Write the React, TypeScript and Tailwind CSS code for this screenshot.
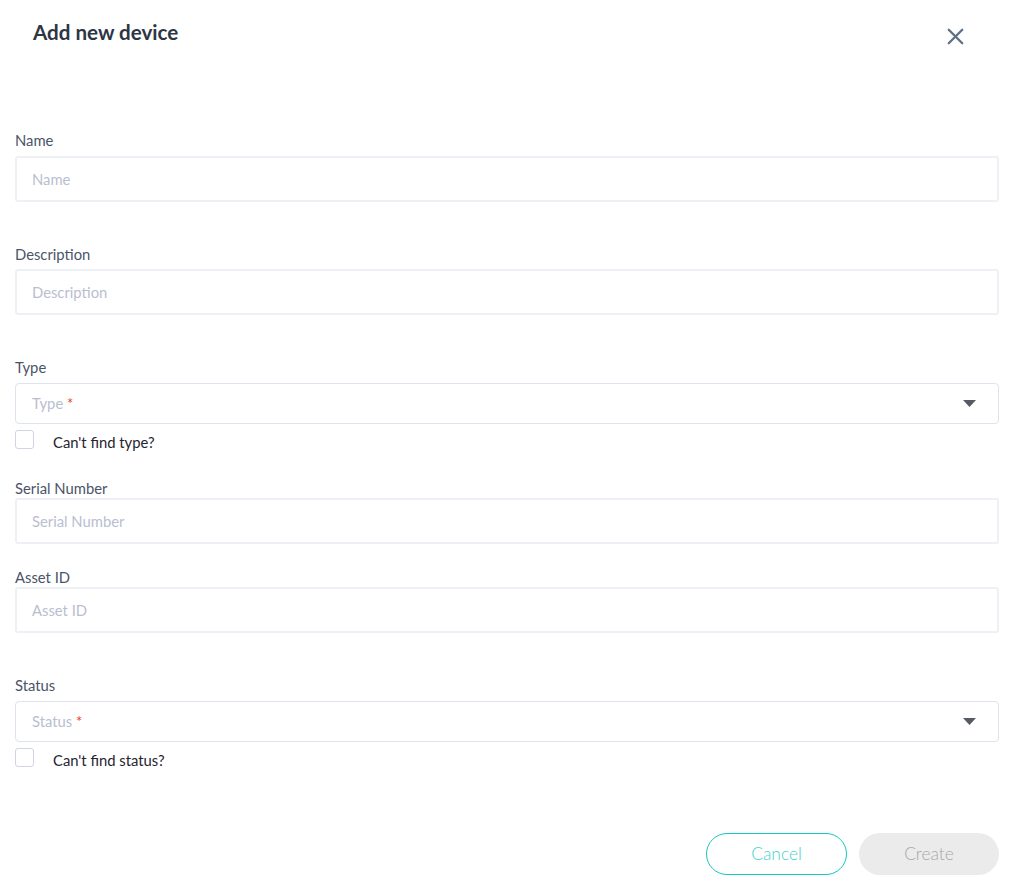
import { X } from 'lucide-react'

function Field({ label, placeholder, top, gap }: { label: string; placeholder: string; top: string; gap: string }) {
  return (
    <div className={top}>
      <label className={`block text-[14.8px] leading-5 text-[#4a5468] ${gap}`}>{label}</label>
      <input
        placeholder={placeholder}
        className="w-full h-[46px] border-2 border-[#edf0f5] rounded-[3px] px-[15px] text-[14.8px] outline-none placeholder-[#b9bed0] text-[#2d3748]"
      />
    </div>
  )
}

function SelectField({ label, placeholder, top, check }: { label: string; placeholder: string; top: string; check: string }) {
  return (
    <div className={top}>
      <label className="block text-[14.8px] leading-5 text-[#4a5468] mb-[6px]">{label}</label>
      <div className="flex items-center justify-between h-[41px] border border-[#dfe3ee] rounded-[4px] pl-[16px] pr-[22px]">
        <span className="text-[14.8px] text-[#b9bed0]">
          {placeholder} <span className="text-[#e8432e]">*</span>
        </span>
        <svg width="13" height="7" viewBox="0 0 13 7">
          <path d="M0 0 L13 0 L6.5 7 Z" fill="#555a63" />
        </svg>
      </div>
      <div className="flex items-center mt-[5px] h-5">
        <span className="w-[19px] h-[19px] border border-[#cfd5e2] rounded-[3px] shrink-0" />
        <span className="ml-[19px] text-[14.8px] text-[#1f2430] mt-[6px]">{check}</span>
      </div>
    </div>
  )
}

export default function App() {
  return (
    <div className="w-[1011px] h-[888px] bg-white pl-[15px] pr-[12px]" style={{ fontFamily: 'Lato, "Open Sans", sans-serif' }}>
      {/* Header */}
      <div className="flex items-start justify-between pt-[20px]">
        <h2 className="ml-[18px] text-[20.6px] leading-6 font-bold text-[#2e3645]">Add new device</h2>
        <button className="mt-[3px] mr-[30px] text-[#5e7085]">
          <X className="w-[27px] h-[27px]" strokeWidth={2} />
        </button>
      </div>

      <Field label="Name" placeholder="Name" top="mt-[80px]" gap="mb-[6px]" />
      <Field label="Description" placeholder="Description" top="mt-[42px]" gap="mb-[5px]" />
      <SelectField label="Type" placeholder="Type" top="mt-[42px]" check="Can't find type?" />
      <Field label="Serial Number" placeholder="Serial Number" top="mt-[29px]" gap="mb-0" />
      <Field label="Asset ID" placeholder="Asset ID" top="mt-[23px]" gap="mb-0" />
      <SelectField label="Status" placeholder="Status" top="mt-[42px]" check="Can't find status?" />

      {/* Footer */}
      <div className="flex justify-end gap-[12px] mt-[66px]">
        <button className="w-[141px] h-[42px] rounded-full border border-[#13c9c0] text-[#45d2ca] text-[17.4px] font-light">
          Cancel
        </button>
        <button className="w-[140px] h-[42px] rounded-full bg-[#ebebeb] text-[#a8a8a8] text-[17.4px] font-light">
          Create
        </button>
      </div>
    </div>
  )
}
